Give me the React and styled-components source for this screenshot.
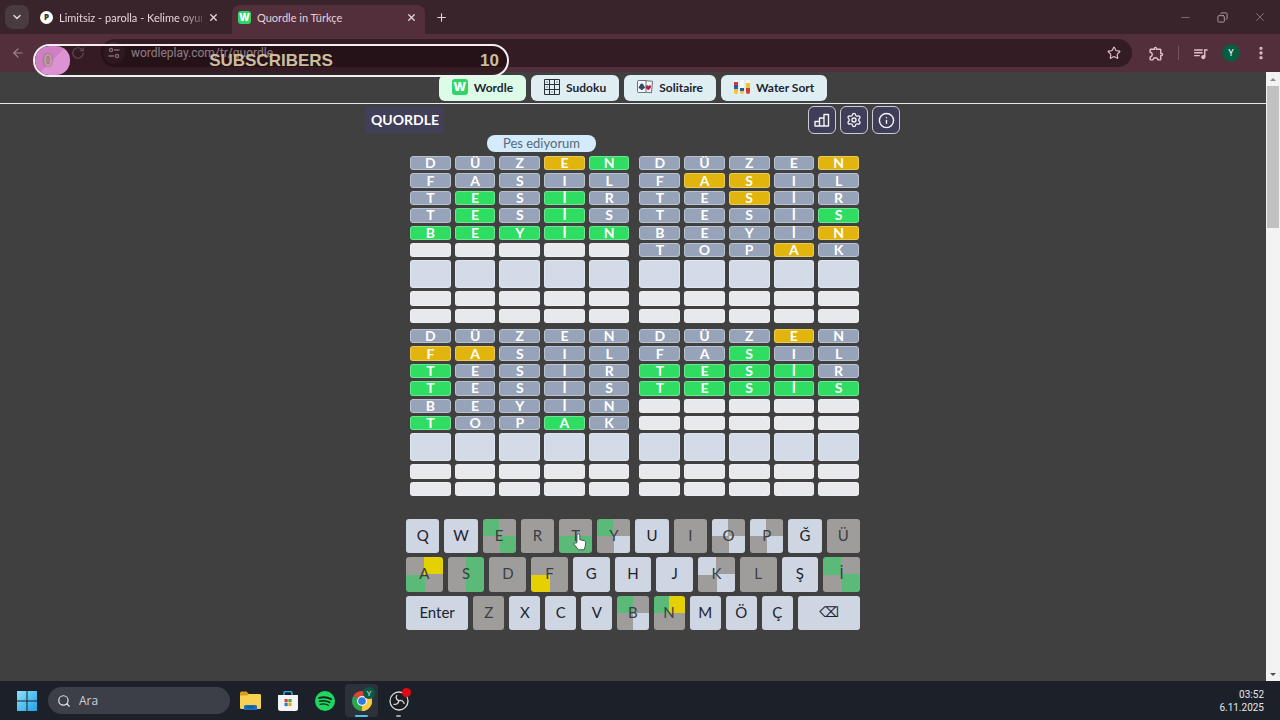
import { useState } from "react"

import { createGlobalStyle, styled } from "styled-components"
import {
    ChevronDown,
    X,
    Plus,
    Minus,
    Copy,
    ArrowLeft,
    RotateCw,
    Star,
    Search,
    Settings,
    Info,
    EllipsisVertical,
} from "lucide-react"
import { MdOutlineExtension, MdOutlineQueueMusic } from "react-icons/md"

// x: not in word, y: wrong place, g: right place
const boards = [
    {
        id: "top-left",
        guesses: [
            ["DÜZEN", "xxxyg"],
            ["FASIL", "xxxxx"],
            ["TESİR", "xgxgx"],
            ["TESİS", "xgxgx"],
            ["BEYİN", "ggggg"],
        ],
    },
    {
        id: "top-right",
        guesses: [
            ["DÜZEN", "xxxxy"],
            ["FASIL", "xyyxx"],
            ["TESİR", "xxyxx"],
            ["TESİS", "xxxxg"],
            ["BEYİN", "xxxxy"],
            ["TOPAK", "xxxyx"],
        ],
    },
    {
        id: "bottom-left",
        guesses: [
            ["DÜZEN", "xxxxx"],
            ["FASIL", "yyxxx"],
            ["TESİR", "gxxxx"],
            ["TESİS", "gxxxx"],
            ["BEYİN", "xxxxx"],
            ["TOPAK", "gxxgx"],
        ],
    },
    {
        id: "bottom-right",
        guesses: [
            ["DÜZEN", "xxxyx"],
            ["FASIL", "xxgxx"],
            ["TESİR", "ggggx"],
            ["TESİS", "ggggg"],
        ],
    },
]

const ROWS = 9
const ACTIVE_ROW = 6

// quarters per key: top left, top right, bottom left, bottom right
const keyRows = [
    [
        ["Q", "wwww"], ["W", "wwww"], ["E", "gxxg"], ["R", "xxxx"], ["T", "xxgg"], ["Y", "gxxw"],
        ["U", "wwww"], ["I", "xxxx"], ["O", "wxxw"], ["P", "wxxw"], ["Ğ", "wwww"], ["Ü", "xxxx"],
    ],
    [
        ["A", "xygx"], ["S", "xgxg"], ["D", "xxxx"], ["F", "xxyx"], ["G", "wwww"], ["H", "wwww"],
        ["J", "wwww"], ["K", "wxxw"], ["L", "xxxx"], ["Ş", "wwww"], ["İ", "gxxg"],
    ],
    [
        ["Enter", "wwww"], ["Z", "xxxx"], ["X", "wwww"], ["C", "wwww"], ["V", "wwww"], ["B", "gxxw"],
        ["N", "gyxx"], ["M", "wwww"], ["Ö", "wwww"], ["Ç", "wwww"], ["⌫", "wwww"],
    ],
]

const tileColors = { x: "#97a3b8", y: "#e2b50e", g: "#2fdd62", empty: "#e8e9ed", active: "#d3dbe9" }
const keyColors = { w: "#cfd6e3", x: "#9e9d9c", g: "#5bba78", y: "#e5d004" }

const WordleIcon = () => (
    <Favicon>W</Favicon>
)

const SudokuIcon = () => (
    <svg width="16" height="16" viewBox="0 0 16 16" fill="none" stroke="#2b3036">
        <path d="M.5.5h15v15H.5zM5.5.5v15M10.5.5v15M.5 5.5h15M.5 10.5h15" />
        <path d="M3 2v2M13 2v2M8 12v2M3 7v2" strokeWidth="1" opacity=".5" />
    </svg>
)

const SolitaireIcon = () => (
    <svg width="16" height="16" viewBox="0 0 16 16">
        <path d="M8 1.500l7.500.8-1 11.500-7-.800z" fill="#f4f7fa" stroke="#4a5258" strokeWidth=".8" />
        <rect x=".5" y="1.500" width="8.500" height="12" rx="1" fill="#f4f7fa" stroke="#4a5258" strokeWidth=".8" />
        <circle cx="4.800" cy="6.200" r="1.800" fill="#2c4c62" />
        <circle cx="3.500" cy="8.200" r="1.700" fill="#2c4c62" />
        <circle cx="6.100" cy="8.200" r="1.700" fill="#2c4c62" />
        <path d="M4.500 8h.6l.9 3H3.600z" fill="#2c4c62" />
        <path d="M11.300 11.300C9 9.500 8.500 8.500 8.800 7.200c.4-1.300 2.100-1.400 2.700-.1.800-1.200 2.500-.9 2.600.4.100 1.400-1.200 2.500-2.800 3.800z" fill="#b5204d" />
    </svg>
)

const WaterIcon = () => (
    <svg width="16" height="16" viewBox="0 0 16 16">
        <path d="M0 1h4v12a2 2 0 0 1-4 0z" fill="#f5f7f8" />
        <path d="M0 3h4v3H0z" fill="#d33a32" />
        <path d="M0 6h4v4H0z" fill="#2858a8" />
        <path d="M0 10h4v3a2 2 0 0 1-4 0z" fill="#f2c32c" />
        <path d="M6 1h4v12a2 2 0 0 1-4 0z" fill="#f5f7f8" />
        <path d="M6 9h4v3H6z" fill="#2858a8" />
        <path d="M6 12h4v1a2 2 0 0 1-4 0z" fill="#f2c32c" />
        <path d="M12 1h4v12a2 2 0 0 1-4 0z" fill="#f5f7f8" />
        <path d="M12 4h4v5h-4z" fill="#f2c32c" />
        <path d="M12 9h4v4a2 2 0 0 1-4 0z" fill="#d33a32" />
    </svg>
)

const StatsIcon = () => (
    <svg width="16" height="16" viewBox="0 0 16 16" fill="none" stroke="currentColor" strokeWidth="1.4" strokeLinejoin="round">
        <path d="M1 14V9.500h4.500V14zM5.500 14V6H10v8zM10 14V2.500h4.500V14z" />
    </svg>
)

const TuneIcon = () => (
    <svg width="12" height="12" viewBox="0 0 12 12" fill="none" stroke="currentColor" strokeWidth="1.300">
        <circle cx="3" cy="3" r="1.600" />
        <path d="M6 3h5.500M.5 9H6" />
        <circle cx="9" cy="9" r="1.600" />
    </svg>
)

const WindowsIcon = () => (
    <svg width="20" height="20" viewBox="0 0 20 20">
        <defs>
            <linearGradient id="win" x1="0" y1="0" x2="1" y2="1">
                <stop offset="0" stopColor="#8fe3fb" />
                <stop offset="1" stopColor="#1c9fe6" />
            </linearGradient>
        </defs>
        <path d="M0 0h9.500v9.500H0zM10.500 0H20v9.500h-9.500zM0 10.500h9.500V20H0zM10.500 10.500H20V20h-9.500z" fill="url(#win)" />
    </svg>
)

const FolderIcon = () => (
    <svg width="21" height="19" viewBox="0 0 21 19">
        <path d="M0 2a1.500 1.500 0 0 1 1.500-1.500h5L9 3h10.500A1.500 1.500 0 0 1 21 4.500V8H0z" fill="#d99e1c" />
        <path d="M0 4.500h7L9 3h10.500A1.500 1.500 0 0 1 21 4.500v12a1.500 1.500 0 0 1-1.500 1.500h-18A1.500 1.500 0 0 1 0 16.500z" fill="#f8d153" />
        <path d="M4 19v-3.500A1.500 1.500 0 0 1 5.500 14h10a1.500 1.500 0 0 1 1.500 1.500V19z" fill="#1c6fb8" />
        <path d="M7 16h7" stroke="#0f4c86" strokeWidth="1" />
    </svg>
)

const StoreIcon = () => (
    <svg width="20" height="20" viewBox="0 0 20 20">
        <path d="M6 5V2a1.500 1.500 0 0 1 1.500-1.500h5A1.500 1.500 0 0 1 14 2v3" fill="none" stroke="#3fa5de" strokeWidth="1.500" />
        <path d="M0 4h20v13.500a2.500 2.500 0 0 1-2.500 2.500h-15A2.500 2.500 0 0 1 0 17.500z" fill="#f3f4f6" />
        <path d="M6.500 8h3.200v3.200H6.500z" fill="#d8432f" />
        <path d="M10.400 8h3.200v3.200h-3.200z" fill="#5d9e31" />
        <path d="M6.500 11.900h3.200v3.200H6.500z" fill="#1f7fc9" />
        <path d="M10.400 11.900h3.200v3.200h-3.200z" fill="#e2a71b" />
    </svg>
)

const SpotifyIcon = () => (
    <svg width="20" height="20" viewBox="0 0 20 20" fill="none" strokeLinecap="round" stroke="#12251a">
        <circle cx="10" cy="10" r="10" fill="#1fd760" stroke="none" />
        <path d="M4.200 7c4-1.200 8.300-.8 11.800 1.200" strokeWidth="2" />
        <path d="M4.700 10.300c3.500-1 7-.6 10 1.100" strokeWidth="1.600" />
        <path d="M5.200 13.300c2.900-.8 5.800-.5 8.200 1" strokeWidth="1.300" />
    </svg>
)

const ChromeIcon = () => (
    <svg width="22" height="22" viewBox="0 0 22 22">
        <path d="M11 11L2.340 6A10 10 0 0 1 19.660 6z" fill="#dc4437" />
        <path d="M11 11L19.660 6A10 10 0 0 1 11 21z" fill="#f7cb3d" />
        <path d="M11 11v10A10 10 0 0 1 2.340 6z" fill="#2da450" />
        <path d="M11 6h8.660A10 10 0 0 1 11 21l4.330-7.500z" fill="#f7cb3d" />
        <circle cx="11" cy="11" r="5" fill="#f2f4f6" />
        <circle cx="11" cy="11" r="3.800" fill="#2f78e0" />
    </svg>
)

const ObsIcon = () => (
    <svg width="20" height="20" viewBox="0 0 20 20" fill="none" stroke="#d8dadc">
        <circle cx="10" cy="10" r="9" fill="#1b1d22" strokeWidth="1.300" />
        <path d="M8 4c-1.600 2.500-.6 5 2 5.700M10 9.700c2.500-.8 4.800.6 5.200 3.300M10 9.700c-.5 2.800-2.600 4.200-5.400 3.600" strokeWidth="1.300" />
    </svg>
)

const HandCursor = () => (
    <Pointer width="14" height="18" viewBox="0 0 14 18">
        <path
            d="M4 9.500V2.200a1.400 1.400 0 0 1 2.800 0v4.500l4.500 1c1 .3 1.500 1 1.400 2l-.5 3.800-1.200 3.300H5.500L1.200 11.500c-.8-1.200.7-2.300 1.700-1.300z"
            fill="#fff"
            stroke="#333"
            strokeWidth=".8"
        />
    </Pointer>
)

const gameLinks = [
    { title: "Wordle", icon: <WordleIcon />, url: "#wordle", active: true },
    { title: "Sudoku", icon: <SudokuIcon />, url: "#sudoku" },
    { title: "Solitaire", icon: <SolitaireIcon />, url: "#solitaire" },
    { title: "Water Sort", icon: <WaterIcon />, url: "#water-sort" },
]

const Board = ({ guesses }) => (
    <BoardGrid>
        {Array.from({ length: ROWS }, (_, row) => {
            const [word, marks] = guesses[row] || ["     ", ""]
            const fallback = row === ACTIVE_ROW ? "active" : "empty"
            return [...word].map((letter, i) => (
                <Tile key={`${row}-${i}`} $state={marks[i] || fallback}>{letter.trim()}</Tile>
            ))
        })}
    </BoardGrid>
)

const BrowserBar = () => {
    const [url, setUrl] = useState("wordleplay.com/tr/quordle")

    return (
        <BrowserHeader>
            <TabStrip>
                <TabSearch aria-label="Search tabs"><ChevronDown size={12} strokeWidth={3} /></TabSearch>
                <Tab>
                    <Favicon $round>P</Favicon>
                    <TabTitle $fade>Limitsiz - parolla - Kelime oyun</TabTitle>
                    <PlainButton aria-label="Close tab"><X size={11} strokeWidth={3} /></PlainButton>
                </Tab>
                <Tab $active>
                    <Favicon $small>W</Favicon>
                    <TabTitle>Quordle in Türkçe</TabTitle>
                    <PlainButton aria-label="Close tab"><X size={11} strokeWidth={3} /></PlainButton>
                </Tab>
                <NewTab aria-label="New tab"><Plus size={13} strokeWidth={2} /></NewTab>
                <WindowControls>
                    <PlainButton aria-label="Minimize"><Minus size={13} strokeWidth={1} /></PlainButton>
                    <PlainButton aria-label="Restore"><RestoreIcon size={11} strokeWidth={2} /></PlainButton>
                    <PlainButton aria-label="Close window"><X size={14} strokeWidth={1} /></PlainButton>
                </WindowControls>
            </TabStrip>
            <Toolbar>
                <NavButtons>
                    <PlainButton aria-label="Back"><ArrowLeft size={14} /></PlainButton>
                    <PlainButton aria-label="Reload"><RotateCw size={14} /></PlainButton>
                </NavButtons>
                <AddressBar>
                    <SiteInfo aria-label="Site information"><TuneIcon /></SiteInfo>
                    <AddressInput aria-label="Address" value={url} onChange={e => setUrl(e.target.value)} />
                    <PlainButton aria-label="Bookmark"><Star size={14} /></PlainButton>
                </AddressBar>
                <ToolbarActions>
                    <PlainButton aria-label="Extensions"><MdOutlineExtension size={17} /></PlainButton>
                    <Separator />
                    <PlainButton aria-label="Media"><MdOutlineQueueMusic size={17} /></PlainButton>
                    <Avatar aria-label="Profile">Y</Avatar>
                    <PlainButton aria-label="Menu"><EllipsisVertical size={16} strokeWidth={3} /></PlainButton>
                </ToolbarActions>
            </Toolbar>
        </BrowserHeader>
    )
}

const Game = () => (
    <GameArea>
        <GameHeader>
            <GameTitle>QUORDLE</GameTitle>
            <HeaderActions>
                <IconButton aria-label="Statistics"><StatsIcon /></IconButton>
                <IconButton aria-label="Settings"><Settings size={16} /></IconButton>
                <IconButton aria-label="Info"><Info size={17} /></IconButton>
            </HeaderActions>
        </GameHeader>
        <Play>
            <GiveUp>Pes ediyorum</GiveUp>
            <Boards>
                {boards.map(board => <Board key={board.id} guesses={board.guesses} />)}
            </Boards>
            <Keyboard>
                {keyRows.map((row, i) => (
                    <KeyRow key={i}>
                        {row.map(([label, marks]) => (
                            <Key
                                key={label}
                                $marks={marks}
                                $wide={label === "Enter" || label === "⌫"}
                                $symbol={label === "⌫"}
                            >
                                {label}
                                {label === "T" && <HandCursor />}
                            </Key>
                        ))}
                    </KeyRow>
                ))}
            </Keyboard>
        </Play>
    </GameArea>
)

const Taskbar = () => (
    <TaskbarWrapper>
        <TaskButton aria-label="Start"><WindowsIcon /></TaskButton>
        <SearchBox>
            <Search size={14} strokeWidth={2} />
            <input aria-label="Ara" placeholder="Ara" />
        </SearchBox>
        <TaskButton aria-label="Files"><FolderIcon /></TaskButton>
        <TaskButton aria-label="Store"><StoreIcon /></TaskButton>
        <TaskButton aria-label="Spotify"><SpotifyIcon /></TaskButton>
        <TaskButton aria-label="Chrome" $active $running>
            <ChromeIcon />
            <Badge>Y</Badge>
        </TaskButton>
        <TaskButton aria-label="OBS" $running>
            <ObsIcon />
            <Badge $recording />
        </TaskButton>
        <Clock>
            <span>03:52</span>
            <span>6.11.2025</span>
        </Clock>
    </TaskbarWrapper>
)

const App = () => (
    <Desktop>
        <GlobalStyle />
        <BrowserBar />
        <Viewport>
            <Page>
                <GameNav>
                    {gameLinks.map(link => (
                        <GameLink key={link.title} href={link.url} $active={link.active}>
                            {link.icon}
                            {link.title}
                        </GameLink>
                    ))}
                </GameNav>
                <Game />
            </Page>
            <Scrollbar>
                <Arrow />
                <Thumb />
                <Arrow $down />
            </Scrollbar>
        </Viewport>
        <Taskbar />
        <Goal>
            <GoalFill>0</GoalFill>
            <span>SUBSCRIBERS</span>
            <GoalTarget>10</GoalTarget>
        </Goal>
    </Desktop>
)

export default App

const GlobalStyle = createGlobalStyle`
    *{
        box-sizing: border-box;
    }

    body{
        margin: 0;
        background: #404040;
        font-family: "Open Sans", "Noto Sans", sans-serif;
    }

    button, input{
        font-family: inherit;
        margin: 0;
        padding: 0;
        border: 0;
        background: none;
        color: inherit;
    }
`

const Desktop = styled.div`
    position: relative;
    display: flex;
    flex-direction: column;
    min-height: 100vh;
`

const BrowserHeader = styled.header`
    font-family: Roboto, "Noto Sans", sans-serif;
`

const PlainButton = styled.button`
    display: flex;
    align-items: center;
    justify-content: center;
`

const TabStrip = styled.div`
    display: flex;
    align-items: center;
    height: 34px;
    padding-left: 5px;
    background: #39242b;
    color: #e6d3d9;
`

const TabSearch = styled(PlainButton)`
    width: 24px;
    height: 24px;
    margin-right: 5px;
    border-radius: 8px;
    background: #4a3b40;
`

const Tab = styled.div`
    display: flex;
    align-items: center;
    gap: 6px;
    width: ${({ $active }) => $active ? "193px" : "198px"};
    height: 29px;
    align-self: flex-end;
    padding: ${({ $active }) => $active ? "0 8px 5px 6px" : "0 13px 5px 6px"};
    border-radius: 8px 8px 0 0;
    background: ${({ $active }) => $active ? "#522f3b" : "transparent"};
`

const Favicon = styled.span`
    display: flex;
    flex-shrink: 0;
    align-items: center;
    justify-content: center;
    width: ${({ $round, $small }) => $round || $small ? "13px" : "16px"};
    height: ${({ $round, $small }) => $round || $small ? "13px" : "16px"};
    border-radius: ${({ $round }) => $round ? "50%" : "3px"};
    background: ${({ $round }) => $round ? "#fff" : "#2fd566"};
    color: ${({ $round }) => $round ? "#333" : "#fff"};
    font-family: "Open Sans", sans-serif;
    font-size: ${({ $round, $small }) => $round ? "8px" : $small ? "10px" : "12px"};
    font-weight: 800;
    line-height: 1;
`

const TabTitle = styled.span`
    flex: 1;
    min-width: 0;
    white-space: nowrap;
    font-family: Lato, "Noto Sans", sans-serif;
    font-size: 11px;
    mask-image: ${({ $fade }) => $fade ? "linear-gradient(90deg, #000 85%, rgba(0,0,0,0.3))" : "none"};
`

const NewTab = styled(PlainButton)`
    margin-left: 10px;
`

const WindowControls = styled.div`
    display: flex;
    gap: 25px;
    margin-left: auto;
    padding-right: 13px;
    color: #b3a0a6;
`

const RestoreIcon = styled(Copy)`
    transform: scaleX(-1);
`

const Toolbar = styled.div`
    display: flex;
    align-items: center;
    gap: 16px;
    height: 38px;
    padding: 0 11px;
    background: #522f3b;
    color: #e0bfca;
`

const NavButtons = styled.div`
    display: flex;
    gap: 46px;
    color: #a08891;
`

const AddressBar = styled.div`
    display: flex;
    flex: 1;
    align-items: center;
    gap: 6px;
    height: 28px;
    padding: 0 11px 0 2px;
    border-radius: 14px;
    background: #331c23;
`

const SiteInfo = styled(PlainButton)`
    width: 22px;
    height: 22px;
    border-radius: 50%;
    background: #45292f;
`

const AddressInput = styled.input`
    flex: 1;
    min-width: 0;
    outline: none;
    font-size: 12px;
    color: #f0dfe4;
`

const ToolbarActions = styled.div`
    display: flex;
    align-items: center;
    gap: 13px;
`

const Separator = styled.span`
    width: 1px;
    height: 14px;
    background: #79525f;
`

const Avatar = styled(PlainButton)`
    width: 18px;
    height: 18px;
    border-radius: 50%;
    background: #0b5a42;
    color: #fff;
    font-size: 9px;
`

const Viewport = styled.div`
    display: flex;
    flex: 1;
`

const Page = styled.main`
    flex: 1;
    background: #404040;
    font-family: Lato, "Open Sans", sans-serif;
`

const GameNav = styled.nav`
    display: flex;
    justify-content: center;
    gap: 5px;
    padding: 3px 0 2px;
    border-bottom: 1px solid #e5e7eb;
`

const GameLink = styled.a`
    display: flex;
    align-items: center;
    gap: 6px;
    height: 26px;
    padding: 0 13px 2px;
    border-radius: 6px;
    background: ${({ $active }) => $active ? "#dcfce7" : "#dfeef3"};
    color: #1b2530;
    font-size: 12px;
    font-weight: 700;
    text-decoration: none;
`

const GameArea = styled.section`
    max-width: 534px;
    margin: 0 auto;
`

const GameHeader = styled.div`
    display: flex;
    align-items: center;
    justify-content: space-between;
    padding: 2px 0 1px;
`

const GameTitle = styled.h1`
    margin: 0;
    padding: 0 5px;
    background: #424058;
    color: #fff;
    font-size: 14px;
    font-weight: 700;
    line-height: 26px;
`

const HeaderActions = styled.div`
    display: flex;
    gap: 4px;
`

const IconButton = styled(PlainButton)`
    width: 28px;
    height: 28px;
    border: 1px solid #c9cbd8;
    border-radius: 6px;
    background: #3f3d57;
    color: #f3f4f8;
`

const Play = styled.div`
    display: flex;
    flex-direction: column;
    align-items: center;
`

const GiveUp = styled.button`
    width: 109px;
    height: 17px;
    margin-right: 183px;
    padding-bottom: 1px;
    border-radius: 8px;
    background: #d3ebfb;
    color: #57697a;
    font-size: 13px;
    line-height: 16px;
`

const Boards = styled.div`
    display: grid;
    grid-template-columns: 1fr 1fr;
    gap: 6px 10px;
    width: 85%;
    margin-top: 4px;
    padding: 0 1px 0 4px;
`

const BoardGrid = styled.div`
    display: grid;
    grid-template-columns: repeat(5, 1fr);
    grid-template-rows: repeat(6, 1fr) 28px repeat(2, 1fr);
    gap: 3px 4px;
    height: 167px;
`

const Tile = styled.div`
    display: flex;
    align-items: center;
    justify-content: center;
    min-height: 0;
    border: 1px solid ${({ $state }) => $state === "x" ? "#bac2d0" : "rgba(255,255,255,0.3)"};
    border-radius: 3px;
    background: ${({ $state }) => tileColors[$state]};
    color: #fff;
    font-size: 14px;
    font-weight: 700;
    line-height: 1;
`

const Keyboard = styled.div`
    display: grid;
    grid-template-rows: repeat(3, 1fr);
    gap: 4px;
    width: 85%;
    height: 111px;
    margin-top: 23px;
`

const KeyRow = styled.div`
    display: flex;
    gap: 5px;
`

const Key = styled.button`
    position: relative;
    flex: ${({ $wide }) => $wide ? 2 : 1};
    min-width: 0;
    padding-bottom: 2px;
    border-radius: 3px;
    background: conic-gradient(
        ${({ $marks }) => keyColors[$marks[1]]} 25%,
        ${({ $marks }) => keyColors[$marks[3]]} 0 50%,
        ${({ $marks }) => keyColors[$marks[2]]} 0 75%,
        ${({ $marks }) => keyColors[$marks[0]]} 0
    );
    color: ${({ $marks }) => $marks === "wwww" ? "#1c2330" : "#3a3d42"};
    font-family: ${({ $symbol }) => $symbol ? `"DejaVu Sans", sans-serif` : "inherit"};
    font-size: ${({ $symbol }) => $symbol ? "14px" : "15px"};
`

const Pointer = styled.svg`
    position: absolute;
    left: 14px;
    top: 14px;
`

const Scrollbar = styled.div`
    display: flex;
    flex-direction: column;
    align-items: center;
    width: 14px;
    background: #f3f3f3;
`

const Thumb = styled.div`
    width: 12px;
    height: 142px;
    margin-bottom: auto;
    background: #c1c1c1;
`

const Arrow = styled.span`
    margin: 6px 0 5px;
    border: 3px solid transparent;
    border-top: ${({ $down }) => $down ? "3px solid #505050" : "0"};
    border-bottom: ${({ $down }) => $down ? "0" : "3px solid #8b8b8b"};
`

const TaskbarWrapper = styled.footer`
    display: flex;
    align-items: center;
    gap: 4px;
    height: 39px;
    padding: 0 16px 0 10px;
    background: #1c2029;
    color: #e4e6ea;
`

const TaskButton = styled(PlainButton)`
    position: relative;
    width: 33px;
    height: 33px;
    border-radius: 4px;
    background: ${({ $active }) => $active ? "#2d323a" : "transparent"};

    &::after{
        content: "";
        display: ${({ $running }) => $running ? "block" : "none"};
        position: absolute;
        bottom: 0;
        width: ${({ $active }) => $active ? "13px" : "5px"};
        height: 2px;
        border-radius: 1px;
        background: ${({ $active }) => $active ? "#4cc2f0" : "#9a9da3"};
    }
`

const Badge = styled.span`
    position: absolute;
    top: ${({ $recording }) => $recording ? "4px" : "3px"};
    right: ${({ $recording }) => $recording ? "4px" : "3px"};
    width: ${({ $recording }) => $recording ? "9px" : "12px"};
    height: ${({ $recording }) => $recording ? "9px" : "12px"};
    border-radius: 50%;
    background: ${({ $recording }) => $recording ? "#e00b12" : "#0b5a42"};
    font-size: 8px;
    line-height: 12px;
    color: #fff;
`

const SearchBox = styled.label`
    display: flex;
    align-items: center;
    gap: 8px;
    width: 182px;
    height: 27px;
    margin-left: 1px;
    padding: 0 9px;
    border-radius: 14px;
    background: #3c3f48;

    input{
        flex: 1;
        min-width: 0;
        outline: none;
        font-size: 12px;
    }

    input::placeholder{
        color: #cdd0d5;
        opacity: 1;
    }
`

const Clock = styled.div`
    display: flex;
    flex-direction: column;
    align-items: flex-end;
    margin-left: auto;
    font-family: Roboto, "Noto Sans", sans-serif;
    font-size: 10px;
    line-height: 13px;
`

const Goal = styled.div`
    position: absolute;
    top: 44px;
    left: 33px;
    display: grid;
    grid-template-columns: 1fr auto 1fr;
    align-items: center;
    width: 476px;
    height: 33px;
    border: 2px solid #f6eef0;
    border-radius: 17px;
    overflow: hidden;
    background: rgba(20,5,10,0.45);
    color: #cbbd9d;
    font-family: "Liberation Sans", Arial, sans-serif;
    font-size: 17px;
    font-weight: 700;
`

const GoalFill = styled.span`
    width: 35px;
    padding-right: 9px;
    border-radius: 14px;
    background: linear-gradient(135deg, #cf7fc6 0 50%, #dd93d3 50%);
    color: #b9a58f;
    line-height: 29px;
    text-align: center;
    text-shadow: 0 0 2px #6f5560;
`

const GoalTarget = styled.span`
    padding-right: 8px;
    text-align: right;
`
